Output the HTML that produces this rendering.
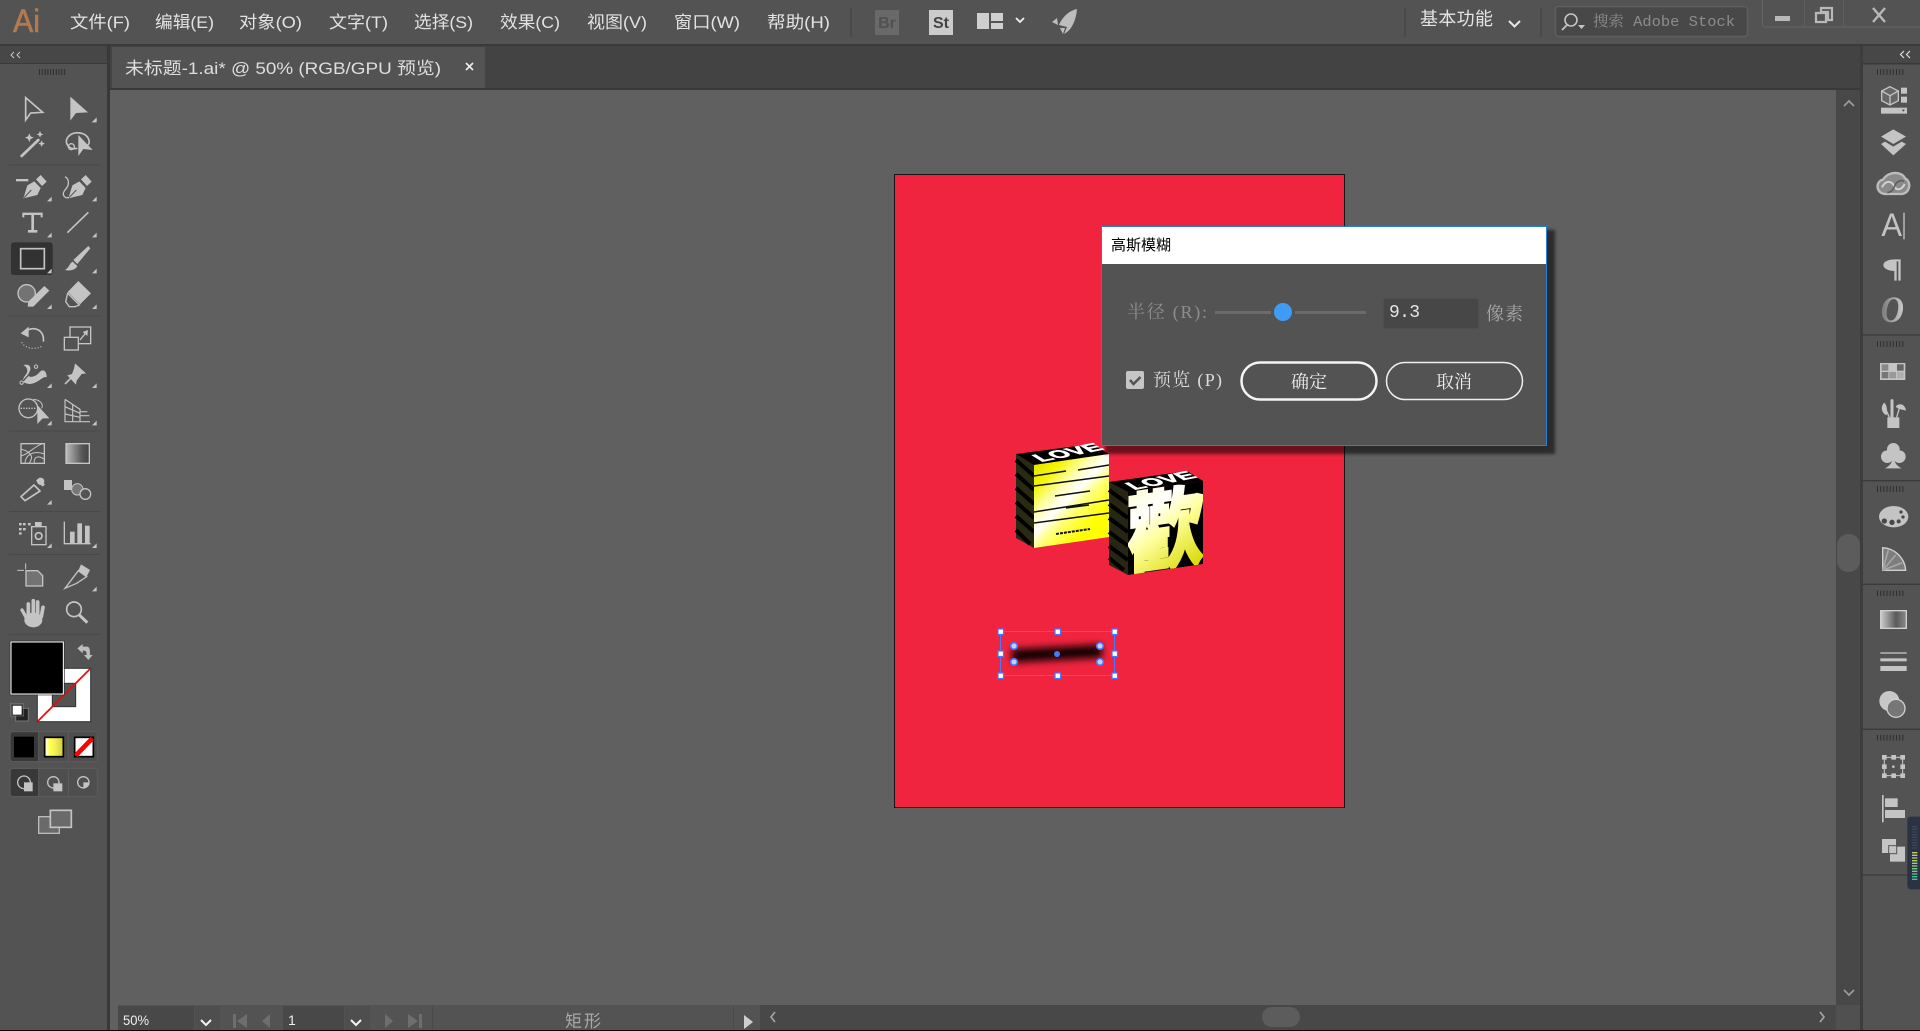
<!DOCTYPE html>
<html lang="zh"><head><meta charset="utf-8"><title>Illustrator</title>
<style>
html,body{margin:0;padding:0;background:#606060;overflow:hidden;width:1920px;height:1031px}
svg{display:block;position:absolute;left:0;top:0}
.s{font-family:"Liberation Sans","Noto Sans CJK SC",sans-serif}
.r{font-family:"Liberation Serif","Noto Serif CJK SC",serif}
.m{font-family:"Liberation Mono","Noto Serif CJK SC",monospace}
.menu{font-size:17px;fill:#e2e2e2}
</style></head><body>
<svg width="1920" height="1031" viewBox="0 0 1920 1031" xmlns="http://www.w3.org/2000/svg">
<defs>
<linearGradient id="g1" x1="0" x2="1"><stop offset="0" stop-color="#bbb"/><stop offset=".7" stop-color="#555"/><stop offset="1" stop-color="#444"/></linearGradient>
<linearGradient id="g2" x1="0" x2="1"><stop offset="0" stop-color="#fff"/><stop offset=".35" stop-color="#ffff30"/><stop offset=".5" stop-color="#f4f460"/><stop offset="1" stop-color="#cfcf30"/></linearGradient>
<linearGradient id="g3" x1="0" x2="1"><stop offset="0" stop-color="#ccc"/><stop offset=".6" stop-color="#5a5a5a"/><stop offset="1" stop-color="#8a8a8a"/></linearGradient>
<linearGradient id="g4" x1="0" x2="1"><stop offset="0" stop-color="#777"/><stop offset="1" stop-color="#ccc"/></linearGradient>
<linearGradient id="yl" gradientUnits="userSpaceOnUse" x1="1034" y1="470" x2="1109" y2="545"><stop offset="0" stop-color="#e8e800"/><stop offset=".12" stop-color="#f4f400"/><stop offset=".3" stop-color="#ffffb0"/><stop offset=".42" stop-color="#ffffff"/><stop offset=".55" stop-color="#ffff70"/><stop offset=".75" stop-color="#ffff00"/><stop offset="1" stop-color="#ffff00"/></linearGradient>
<linearGradient id="yr" gradientUnits="userSpaceOnUse" x1="0" y1="-78" x2="55" y2="12"><stop offset="0" stop-color="#ffffd0"/><stop offset=".3" stop-color="#ffffff"/><stop offset=".55" stop-color="#ffffa0"/><stop offset="1" stop-color="#dcdc10"/></linearGradient>
<clipPath id="cr"><polygon points="1128,492 1203,481 1203,564 1128,575"/></clipPath>
<filter id="bl" x="-30%" y="-200%" width="160%" height="500%"><feGaussianBlur stdDeviation="3.800"/></filter>
<filter id="sh" x="-5%" y="-5%" width="110%" height="110%"><feGaussianBlur stdDeviation="1.5"/></filter>
</defs>

<!-- base -->
<rect width="1920" height="1031" fill="#606060"/>

<!-- artboard -->
<rect x="894.500" y="174.500" width="450" height="633" fill="#f1243f" stroke="#161616" stroke-width="1"/>

<!-- 3D lettering left -->
<polygon points="1016,454 1034,465 1034,548 1016,538" fill="#2a2a12"/>
<g stroke="#000" stroke-width="4"><path d="M1016 460 1034 476M1016 474 1034 490M1016 488 1034 504M1016 502 1034 518M1016 516 1034 532M1016 530 1030 544"/></g>
<polygon points="1016,454 1092,444 1109,454 1034,465" fill="#000"/>
<polygon points="1034,465 1109,454 1109,537 1034,548" fill="url(#yl)"/>
<g stroke="#111" fill="none">
<path stroke-width="1.500" d="M1034 476 1066 471M1078 470 1109 465M1034 486 1109 476M1055 496 1090 491M1066 508 1089 505M1034 512 1109 500M1034 523 1109 513"/>
<path stroke-width="2" stroke-dasharray="3 1" d="M1056 534 1090 529"/>
</g>
<text class="s" font-size="17" font-weight="700" fill="#fff" stroke="#fff" stroke-width=".7" transform="matrix(1 -.2 .9 .55 1041 462)" textLength="64" lengthAdjust="spacingAndGlyphs">LOVE</text>

<!-- 3D lettering right -->
<polygon points="1109,482 1128,492 1128,575 1109,565" fill="#262612"/>
<g stroke="#000" stroke-width="4"><path d="M1109 490 1128 504M1109 504 1128 518M1109 518 1128 532M1109 532 1128 546M1109 546 1128 560M1109 558 1124 570"/></g>
<polygon points="1109,482 1187,471 1203,481 1128,492" fill="#000"/>
<polygon points="1128,492 1203,481 1203,564 1128,575" fill="#000"/>
<g clip-path="url(#cr)">
<text font-size="88" font-weight="900" fill="url(#yr)" stroke="url(#yr)" stroke-width="2.500" transform="matrix(1 -.147 0 1 1127 568)" textLength="77" lengthAdjust="spacingAndGlyphs" style="font-family:'Noto Sans CJK TC','Noto Sans CJK SC',sans-serif">歡</text>
</g>
<text class="s" font-size="17" font-weight="700" fill="#fff" stroke="#fff" stroke-width=".7" transform="matrix(1 -.2 .9 .55 1134 490)" textLength="64" lengthAdjust="spacingAndGlyphs">LOVE</text>

<!-- blurred object + selection -->
<rect x="1012" y="647" width="90" height="13" fill="#0a0003" filter="url(#bl)" transform="rotate(-3 1057 654)"/>
<rect x="1000.500" y="631.500" width="114" height="44" fill="none" stroke="#4a78ff" stroke-width="1"/>
<g fill="#fff" stroke="#3f7cff" stroke-width="1.200">
<rect x="998" y="629" width="5.500" height="5.500"/><rect x="1055" y="629" width="5.500" height="5.500"/><rect x="1112" y="629" width="5.500" height="5.500"/>
<rect x="998" y="651" width="5.500" height="5.500"/><rect x="1112" y="651" width="5.500" height="5.500"/>
<rect x="998" y="673" width="5.500" height="5.500"/><rect x="1055" y="673" width="5.500" height="5.500"/><rect x="1112" y="673" width="5.500" height="5.500"/>
</g>
<circle cx="1057" cy="654" r="3" fill="#3f7cff"/>
<g fill="#bcd0ff" stroke="#3f7cff" stroke-width="1.500">
<circle cx="1014" cy="646" r="3.300"/><circle cx="1100" cy="646" r="3.300"/><circle cx="1014" cy="662" r="3.300"/><circle cx="1100" cy="662" r="3.300"/>
</g>

<!-- dialog -->
<rect x="1105" y="230" width="450" height="224" fill="#000" opacity=".55" filter="url(#sh)"/>
<rect x="1101.500" y="226.500" width="445" height="219" fill="#535353" stroke="#2a7fd8" stroke-width="1"/>
<rect x="1102" y="227" width="444" height="37" fill="#fff"/>
<text class="s" x="1111" y="250" font-size="15" fill="#000" textLength="60">高斯模糊</text>
<text class="r" x="1127" y="318" font-size="18" fill="#8e8e8e" textLength="80" lengthAdjust="spacing">半径 (R):</text>
<rect x="1215" y="311" width="151" height="3" fill="#6b6b6b"/>
<circle cx="1283" cy="312" r="12" fill="#535353"/>
<circle cx="1283" cy="312" r="9" fill="#3f9bf5"/>
<rect x="1383.500" y="298.500" width="95" height="30" rx="3" fill="#474747" stroke="#4e4e4e"/>
<text class="m" x="1389" y="317" font-size="18" fill="#e6e6e6" textLength="31" lengthAdjust="spacing">9.3</text>
<text class="r" x="1486" y="320" font-size="18" fill="#a8a8a8" textLength="37">像素</text>
<rect x="1126" y="371" width="18" height="18" rx="2" fill="#c6c6c6"/>
<path d="M1130 380l3.500 4 7-7" fill="none" stroke="#555" stroke-width="2.500"/>
<text class="r" x="1153" y="386" font-size="18" fill="#dcdcdc" textLength="69" lengthAdjust="spacing">预览 (P)</text>
<rect x="1241.500" y="362.500" width="135" height="37" rx="18.500" fill="none" stroke="#f4f4f4" stroke-width="2.500"/>
<text class="r" x="1309" y="388" font-size="18" fill="#eee" text-anchor="middle">确定</text>
<rect x="1386.500" y="362.500" width="136" height="37" rx="18.500" fill="none" stroke="#eee" stroke-width="1.500"/>
<text class="r" x="1454" y="388" font-size="18" fill="#eee" text-anchor="middle">取消</text>

<!-- top bar -->
<rect width="1920" height="45" fill="#535353"/>
<rect y="44" width="1920" height="2" fill="#3a3a3a"/>
<text class="s" x="13" y="32" font-size="32" fill="#b47a4c" stroke="#b47a4c" stroke-width=".6" textLength="27" lengthAdjust="spacingAndGlyphs">Ai</text>
<g class="s menu">
<text x="70" y="28" textLength="60" lengthAdjust="spacingAndGlyphs">文件(F)</text>
<text x="155" y="28" textLength="59" lengthAdjust="spacingAndGlyphs">编辑(E)</text>
<text x="239" y="28" textLength="63" lengthAdjust="spacingAndGlyphs">对象(O)</text>
<text x="329" y="28" textLength="59" lengthAdjust="spacingAndGlyphs">文字(T)</text>
<text x="414" y="28" textLength="59" lengthAdjust="spacingAndGlyphs">选择(S)</text>
<text x="500" y="28" textLength="60" lengthAdjust="spacingAndGlyphs">效果(C)</text>
<text x="587" y="28" textLength="60" lengthAdjust="spacingAndGlyphs">视图(V)</text>
<text x="674" y="28" textLength="66" lengthAdjust="spacingAndGlyphs">窗口(W)</text>
<text x="767" y="28" textLength="63" lengthAdjust="spacingAndGlyphs">帮助(H)</text>
</g>
<rect x="850" y="8" width="2" height="29" fill="#4a4a4a"/>
<rect x="875" y="10" width="24" height="25" fill="#696969"/>
<text class="s" x="887" y="28" font-size="16" font-weight="700" fill="#505050" text-anchor="middle">Br</text>
<rect x="929" y="10" width="24" height="25" fill="#cbcbcb"/>
<text class="s" x="941" y="28" font-size="16" font-weight="700" fill="#444" text-anchor="middle">St</text>
<path d="M977 13h12v16h-12zM991 13h12v8h-12zM991 23h12v6h-12z" fill="#cfcfcf"/>
<path d="M1016 18l4 4 4-4" fill="none" stroke="#f0f0f0" stroke-width="1.800"/>
<path d="M1077 9C1068 11 1062 18 1059 25L1067 27 1064 34C1072 30 1076 20 1077 9ZM1057 18L1052 22 1058 25ZM1060 28L1063 34 1065 28Z" fill="#bdbdbd"/>
<rect x="1404" y="8" width="2" height="29" fill="#4a4a4a"/>
<text class="s" x="1420" y="25" font-size="18" fill="#e4e4e4" textLength="73">基本功能</text>
<path d="M1509 21l5.500 5.500 5.500-5.500" fill="none" stroke="#e8e8e8" stroke-width="2"/>
<rect x="1540" y="8" width="2" height="29" fill="#4a4a4a"/>
<rect x="1555.500" y="6.500" width="192" height="30" rx="3" fill="#484848" stroke="#5e5e5e" stroke-width="1.500"/>
<circle cx="1571" cy="20" r="6" fill="none" stroke="#c4c4c4" stroke-width="1.600"/>
<path d="M1567 25l-5 5" stroke="#c4c4c4" stroke-width="1.800"/>
<path d="M1578 25h7l-3.500 4z" fill="#c4c4c4"/>
<text class="m" x="1593" y="26" font-size="15" fill="#8c8c8c" textLength="142" lengthAdjust="spacingAndGlyphs">搜索 Adobe Stock</text>
<path d="M1762.500 0V24q0 3 3 3H1920" fill="none" stroke="#646464"/>
<path d="M1804.500 0V27M1843.500 0V27" stroke="#5e5e5e"/>
<rect x="1775" y="16" width="15" height="5" fill="#b8b8b8"/>
<path d="M1821 8h11v12h-4v-8h-7z M1816 13h10v9h-10z" fill="none" stroke="#b8b8b8" stroke-width="2.200"/>
<path d="M1873 8l12 14M1885 8l-12 14" stroke="#b8b8b8" stroke-width="2.400"/>

<!-- tab bar -->
<rect x="110" y="46" width="1752" height="44" fill="#434343"/>
<rect x="110" y="88" width="1752" height="2" fill="#393939"/>
<rect x="112" y="47" width="373" height="41" fill="#535353"/>
<text class="s" x="125" y="74" font-size="17" fill="#dedede" textLength="316" lengthAdjust="spacingAndGlyphs">未标题-1.ai* @ 50% (RGB/GPU 预览)</text>
<path d="M466 63l7 7M473 63l-7 7" stroke="#eee" stroke-width="1.600"/>

<!-- left panel -->
<rect x="0" y="46" width="108" height="985" fill="#535353"/>
<rect x="0" y="46" width="108" height="18" fill="#474747"/>
<rect x="0" y="63" width="108" height="1" fill="#3a3a3a"/>
<rect x="107" y="46" width="3" height="985" fill="#383838"/>
<path d="M14 52l-3 3 3 3M20 52l-3 3 3 3" fill="none" stroke="#c8c8c8" stroke-width="1"/>
<path d="M39 72H67" stroke="#2e2e2e" stroke-width="6" stroke-dasharray="1 1.800"/>

<g transform="translate(0,80) scale(.33333)" fill="#c4c4c4" stroke="none">
 <path d="M77 53L128 97 92 99 77 120Z" fill="none" stroke="#c4c4c4" stroke-width="5"/>
 <path d="M211 50L264 97 228 99 211 122Z"/>
 <path d="M290 112v15h-15z"/>
 <path d="M65 228L115 180" stroke="#c4c4c4" stroke-width="8" stroke-linecap="round"/>
 <path d="M88 160l4 9 9 4-9 4-4 9-4-9-9-4 9-4zM120 153l3 7 7 3-7 3-3 7-3-7-7-3 7-3zM125 181l3 7 7 3-7 3-3 7-3-7-7-3 7-3z"/>
 <path d="M232 205C205 212 190 185 205 170 220 152 258 155 266 178 270 190 266 196 256 198" fill="none" stroke="#c4c4c4" stroke-width="5"/>
 <circle cx="214" cy="200" r="9" fill="none" stroke="#c4c4c4" stroke-width="4"/>
 <path d="M235 165L278 210 250 207 235 228Z"/>
 <rect x="48" y="297" width="37" height="7"/>
 <path d="M108 298L122 285 140 305 126 318ZM103 304L122 324 112 345 70 355 82 316Z"/>
 <path d="M72 353L94 330" stroke="#535353" stroke-width="3"/>
 <path d="M155 350v14h-14z"/>
 <path d="M243 298L257 285 275 305 261 318ZM238 304L257 324 247 345 205 355 217 316Z"/>
 <path d="M207 353L229 330" stroke="#535353" stroke-width="3"/>
 <path d="M195 290C212 300 205 320 195 330 183 345 195 357 207 352" fill="none" stroke="#c4c4c4" stroke-width="4"/>
 <path d="M290 350v14h-14z"/>
 <path d="M67 398H128V412H122V405H102V450H112V458H84V450H94V405H73V412H67Z"/>
 <path d="M155 458v14h-14z"/>
 <path d="M202 458L265 397" stroke="#c4c4c4" stroke-width="5"/>
 <path d="M290 458v14h-14z"/>
 <rect x="33" y="487" width="125" height="98" rx="8" fill="#323232"/>
 <rect x="62" y="506" width="71" height="60" fill="none" stroke="#c4c4c4" stroke-width="5"/>
 <path d="M155 566v14h-14z"/>
 <path d="M265 498L271 505 232 552 220 540ZM218 545L232 558C226 572 205 573 195 570 208 563 208 550 218 545Z"/>
 <path d="M290 566v14h-14z"/>
 <circle cx="80" cy="640" r="26" fill="#737373" stroke="#c4c4c4" stroke-width="4"/>
 <path d="M85 665L133 618 148 632 100 680 83 680Z"/>
 <path d="M155 673v14h-14z"/>
 <path d="M235 603L273 640 240 673 203 636Z"/>
 <path d="M203 640L238 675 225 680H208L197 665Z" fill="#535353" stroke="#c4c4c4" stroke-width="4"/>
 <path d="M290 673v14h-14z"/>
 <path d="M27 708H300M27 255H300" stroke="#484848" stroke-width="3"/>
 <path d="M75 755C100 735 135 750 130 785" fill="none" stroke="#c4c4c4" stroke-width="5"/>
 <path d="M62 760L86 740V772Z"/>
 <path d="M65 787C75 805 105 812 128 797" fill="none" stroke="#c4c4c4" stroke-width="4" stroke-dasharray="3 6"/>
 <rect x="210" y="741" width="62" height="50" fill="none" stroke="#c4c4c4" stroke-width="4"/>
 <rect x="193" y="772" width="42" height="38" fill="#535353" stroke="#c4c4c4" stroke-width="4"/>
 <path d="M240 780L258 758" stroke="#c4c4c4" stroke-width="4"/>
 <path d="M264 750L262 768 248 756Z"/>
</g>

<g transform="translate(0,350) scale(.33333)" fill="#c4c4c4" stroke="none">
 <path d="M70 45C92 40 96 55 86 70 80 85 105 85 120 65 130 55 141 65 140 82 130 76 115 100 90 102 70 100 60 95 80 70 85 60 80 50 70 45Z"/>
 <path d="M65 98L108 50" stroke="#535353" stroke-width="4"/>
 <circle cx="65" cy="98" r="5" fill="#535353" stroke="#c4c4c4" stroke-width="3"/><circle cx="108" cy="50" r="5" fill="#535353" stroke="#c4c4c4" stroke-width="3"/>
 <path d="M155 100v14h-14z"/>
 <path d="M225 40L258 70 245 72 230 92 228 104 202 76 216 72 222 56Z"/>
 <path d="M212 85L195 102" stroke="#c4c4c4" stroke-width="5"/>
 <path d="M290 100v14h-14z"/>
 <circle cx="85" cy="175" r="28" fill="none" stroke="#c4c4c4" stroke-width="4"/>
 <path d="M100 148C125 150 130 165 125 175" fill="none" stroke="#c4c4c4" stroke-width="3"/>
 <path d="M62 175H110" stroke="#c4c4c4" stroke-width="4" stroke-dasharray="4 4"/>
 <path d="M112 165L148 205 128 205 112 222Z"/>
 <path d="M155 212v14h-14z"/>
 <path d="M195 148V215H270M195 148L240 178V215M195 170L240 190M195 192L240 202M218 162V215M240 185H262M240 197H268" fill="none" stroke="#c4c4c4" stroke-width="3.500"/>
 <path d="M290 212v14h-14z"/>
 <path d="M27 243H300M27 484H300M27 613H300" stroke="#484848" stroke-width="3"/>
 <rect x="63" y="281" width="70" height="59" fill="none" stroke="#c4c4c4" stroke-width="4"/>
 <path d="M63 318C90 310 100 290 128 281M75 340C75 315 100 300 133 312M103 340C100 320 115 315 133 328M63 298C80 300 90 310 95 320M95 320C95 330 90 335 88 340" fill="none" stroke="#c4c4c4" stroke-width="3"/>
 <rect x="198" y="281" width="70" height="59" fill="url(#g1)" stroke="#c4c4c4" stroke-width="4"/>
 <path d="M115 385L135 403 128 410 108 392Z"/>
 <circle cx="122" cy="394" r="11"/>
 <path d="M102 405L120 423 75 452 63 440Z" fill="none" stroke="#c4c4c4" stroke-width="5" stroke-linejoin="round"/>
 <path d="M155 450v14h-14z"/>
 <rect x="192" y="390" width="24" height="30"/>
 <circle cx="232" cy="418" r="17" fill="#777" stroke="#c4c4c4" stroke-width="3"/>
 <circle cx="256" cy="432" r="16" fill="#535353" stroke="#c4c4c4" stroke-width="4"/>
 <path d="M57 519h8v7h-8zM69 519h8v7h-8zM84 519h8v7h-8zM57 534h8v7h-8zM69 534h8v7h-8zM57 547h8v7h-8z"/>
 <rect x="105" y="516" width="20" height="14"/>
 <rect x="95" y="530" width="43" height="54" fill="none" stroke="#c4c4c4" stroke-width="4"/>
 <circle cx="116" cy="558" r="10" fill="none" stroke="#c4c4c4" stroke-width="5"/>
 <path d="M155 580v14h-14z"/>
 <path d="M193 515V581H272" fill="none" stroke="#c4c4c4" stroke-width="4"/>
 <rect x="210" y="545" width="14" height="35"/><rect x="232" y="520" width="14" height="60"/><rect x="255" y="527" width="14" height="53"/>
 <path d="M290 580v14h-14z"/>
 <path d="M77 640V658M52 661H72" stroke="#c4c4c4" stroke-width="3"/>
 <path d="M78 662H113L128 677V708H78Z" fill="#737373" stroke="#c4c4c4" stroke-width="4"/>
 <path d="M243 643L270 660 260 680 235 662Z"/>
 <path d="M235 662L260 680 230 700 195 715Z" fill="none" stroke="#c4c4c4" stroke-width="4"/>
 <path d="M290 710v14h-14z"/>
 <path d="M85 800V762M100 795V752M113 795V756M124 800L129 772" stroke="#c4c4c4" stroke-width="11" stroke-linecap="round"/>
 <path d="M66 780L80 805" stroke="#c4c4c4" stroke-width="10" stroke-linecap="round"/>
 <ellipse cx="100" cy="810" rx="27" ry="22"/>
 <circle cx="222" cy="778" r="22" fill="none" stroke="#c4c4c4" stroke-width="5"/>
 <path d="M238 795L262 818" stroke="#c4c4c4" stroke-width="9"/>
</g>

<g transform="translate(0,620) scale(.33333)" fill="#c4c4c4" stroke="none">
 <path d="M27 43H300" stroke="#484848" stroke-width="3"/>
 <rect x="112" y="145" width="160" height="160" fill="#fff" stroke="#333" stroke-width="3"/>
 <rect x="157" y="190" width="70" height="70" fill="#535353" stroke="#333" stroke-width="3"/>
 <path d="M114 303L270 147" stroke="#f00" stroke-width="5"/>
 <rect x="33" y="66" width="157" height="156" fill="#000" stroke="#fff" stroke-width="3"/>
 <rect x="30" y="63" width="163" height="162" fill="none" stroke="#333" stroke-width="2"/>
 <path d="M232 85L248 72V80H262C270 82 270 92 270 105H278L265 120 252 105H260C260 95 258 92 250 92H248V100Z" fill="#bdbdbd"/>
 <rect x="47" y="265" width="38" height="38" fill="#222" stroke="#777" stroke-width="3"/>
 <rect x="31" y="250" width="40" height="38" fill="none" stroke="#777" stroke-width="2"/>
 <rect x="37" y="256" width="29" height="29" fill="#fff" stroke="#111" stroke-width="2"/>
 <rect x="30" y="335" width="262" height="90" rx="8" fill="#4e4e4e" stroke="#5c5c5c" stroke-width="3"/>
 <path d="M32 345q0-8 8-8H115V423H40q-8 0-8-8Z" fill="#383838"/>
 <path d="M116 337V423M205 337V423" stroke="#5c5c5c" stroke-width="3"/>
 <rect x="42" y="350" width="60" height="62" fill="#000"/>
 <rect x="134" y="352" width="56" height="58" fill="url(#g2)" stroke="#000" stroke-width="5"/>
 <rect x="224" y="352" width="56" height="58" fill="#fff" stroke="#000" stroke-width="5"/>
 <path d="M227 407L277 355" stroke="#f00" stroke-width="14"/>
 <rect x="30" y="445" width="262" height="85" rx="8" fill="#4e4e4e" stroke="#5c5c5c" stroke-width="3"/>
 <path d="M32 455q0-8 8-8H115V528H40q-8 0-8-8Z" fill="#383838"/>
 <path d="M116 447V528M205 447V528" stroke="#5c5c5c" stroke-width="3"/>
 <circle cx="72" cy="487" r="19" fill="none" stroke="#c4c4c4" stroke-width="4"/>
 <rect x="72" y="487" width="26" height="27"/>
 <circle cx="160" cy="487" r="17" fill="none" stroke="#c4c4c4" stroke-width="4"/>
 <rect x="160" y="490" width="27" height="24"/>
 <circle cx="250" cy="487" r="17" fill="none" stroke="#c4c4c4" stroke-width="4"/>
 <path d="M250 487h17a17 17 0 0 1-17 17Z"/>
 <rect x="116" y="590" width="62" height="50" fill="#6a6a6a" stroke="#bbb" stroke-width="4"/>
 <rect x="151" y="571" width="63" height="51" fill="#6a6a6a" stroke="#c4c4c4" stroke-width="5"/>
</g>

<!-- canvas scrollbars -->
<rect x="1836" y="90" width="26" height="915" fill="#484848"/>
<rect x="1837" y="534" width="23" height="38" rx="11" fill="#5c5c5c"/>
<path d="M1844 106l5-5 5 5" fill="none" stroke="#9a9a9a" stroke-width="1.800"/>
<path d="M1844 990l5 5 5-5" fill="none" stroke="#9a9a9a" stroke-width="1.800"/>
<rect x="1836" y="1005" width="24" height="25" fill="#505050"/>

<!-- right panel -->
<rect x="1860" y="46" width="3" height="985" fill="#3d3d3d"/>
<rect x="1863" y="46" width="57" height="985" fill="#535353"/>
<rect x="1863" y="46" width="57" height="18" fill="#474747"/>
<rect x="1863" y="63" width="57" height="1.500" fill="#383838"/>
<path d="M1904 51l-3.500 3.500 3.500 3.500M1910 51l-3.500 3.500 3.500 3.500" fill="none" stroke="#e0e0e0" stroke-width="1.200"/>

<g transform="translate(1830,40) scale(.33333)" fill="#c4c4c4" stroke="none">
 <path d="M141 96H226" stroke="#2e2e2e" stroke-width="17" stroke-dasharray="3 6.500"/>
 <path d="M180 140L205 153V182L180 195 155 182V153Z" fill="#666" stroke="#c4c4c4" stroke-width="4"/>
 <path d="M155 153L180 167 205 153M180 167V195" fill="none" stroke="#c4c4c4" stroke-width="4"/>
 <rect x="213" y="143" width="18" height="18"/><rect x="213" y="170" width="18" height="18"/>
 <rect x="153" y="203" width="78" height="18"/>
 <path d="M215 209h10l-5 6z" fill="#444"/>
 <path d="M190 268L228 290 190 312 153 290Z"/>
 <path d="M153 312L165 305 190 320 215 305 228 312 190 346Z"/>
 <path d="M165 462C138 460 134 425 160 418 175 393 215 393 225 415 246 425 240 460 215 462Z" fill="#8a8a8a" stroke="#bdbdbd" stroke-width="7"/>
 <path d="M156 442C168 418 186 424 192 438 199 452 214 452 224 432" fill="none" stroke="#d0d0d0" stroke-width="6"/>
 <path d="M172 458C186 456 190 448 194 438 198 426 212 418 222 424" fill="none" stroke="#5e5e5e" stroke-width="5"/>
 <text class="s" x="154" y="588" font-size="96" fill="#c4c4c4" textLength="62" lengthAdjust="spacingAndGlyphs">A</text>
 <rect x="220" y="518" width="4" height="80"/>
 <path d="M195 658H212V722H205V664H200V722H193V693C175 693 160 685 160 675 160 665 175 658 195 658Z"/>
 <text class="r" x="152" y="846" font-size="110" font-style="italic" font-weight="700" fill="url(#g4)" textLength="70" lengthAdjust="spacingAndGlyphs">O</text>
 <path d="M97 885H270" stroke="#3a3a3a" stroke-width="4"/>
</g>

<g transform="translate(1830,340) scale(.33333)" fill="#c4c4c4" stroke="none">
 <path d="M141 12H226" stroke="#2e2e2e" stroke-width="17" stroke-dasharray="3 6.500"/>
 <rect x="150" y="69" width="76" height="51"/>
 <rect x="155" y="73" width="20" height="19" fill="#888"/><rect x="178" y="73" width="20" height="19" fill="#c6c6c6"/><rect x="201" y="73" width="20" height="19" fill="#666"/>
 <rect x="155" y="96" width="20" height="19" fill="#777"/><rect x="178" y="96" width="20" height="19" fill="#999"/><rect x="201" y="96" width="20" height="19" fill="#b0b0b0"/>
 <rect x="172" y="232" width="36" height="32"/>
 <path d="M186 232V182" stroke="#c4c4c4" stroke-width="9" stroke-linecap="round"/>
 <path d="M178 232L166 205" stroke="#c4c4c4" stroke-width="4"/>
 <path d="M200 232L208 205" stroke="#c4c4c4" stroke-width="4"/>
 <path d="M163 188C150 200 155 220 170 226 172 210 172 198 163 188ZM197 200C205 188 225 190 228 212 215 208 205 208 197 200Z"/>
 <circle cx="190" cy="328" r="19"/><circle cx="172" cy="350" r="19"/><circle cx="208" cy="350" r="19"/>
 <path d="M188 345C188 365 184 375 165 385H215C196 375 192 365 192 345Z"/>
 <path d="M97 422H270M97 733H270" stroke="#3a3a3a" stroke-width="4"/>
 <path d="M141 447H226" stroke="#2e2e2e" stroke-width="17" stroke-dasharray="3 6.500"/>
 <ellipse cx="191" cy="530" rx="44" ry="32"/>
 <circle cx="163" cy="543" r="8" fill="#484848"/><circle cx="186" cy="547" r="8" fill="#484848"/><circle cx="206" cy="544" r="6" fill="#484848"/><circle cx="219" cy="531" r="5" fill="#484848"/><circle cx="213" cy="516" r="5" fill="#484848"/>
 <path d="M158 623C195 625 225 655 227 691H158Z" fill="#7d7d7d" stroke="#d0d0d0" stroke-width="4"/>
 <path d="M158 691L175 630M158 691L197 645M158 691L217 668" stroke="#a5a5a5" stroke-width="5"/>
 <path d="M141 760H226" stroke="#2e2e2e" stroke-width="17" stroke-dasharray="3 6.500"/>
 <rect x="152" y="812" width="77" height="53" fill="url(#g3)" stroke="#d0d0d0" stroke-width="4"/>
</g>

<g transform="translate(1830,640) scale(.33333)" fill="#c4c4c4" stroke="none">
 <rect x="151" y="37" width="79" height="4"/><rect x="151" y="55" width="79" height="9"/><rect x="151" y="78" width="79" height="15"/>
 <circle cx="178" cy="183" r="30" fill="#c8c8c8"/>
 <circle cx="198" cy="205" r="27" fill="#777" stroke="#cfcfcf" stroke-width="4"/>
 <path d="M97 268H270M97 705H270" stroke="#3a3a3a" stroke-width="4"/>
 <path d="M141 293H226" stroke="#2e2e2e" stroke-width="17" stroke-dasharray="3 6.500"/>
 <rect x="163" y="352" width="55" height="55" fill="none" stroke="#ccc" stroke-width="3"/>
 <path d="M156 345h14v14h-14zM184 345h14v14h-14zM211 345h14v14h-14zM156 373h14v14h-14zM211 373h14v14h-14zM156 400h14v14h-14zM184 400h14v14h-14zM211 400h14v14h-14z"/>
 <circle cx="190" cy="380" r="4"/>
 <rect x="156" y="465" width="5" height="82"/>
 <rect x="165" y="475" width="38" height="26"/><rect x="165" y="510" width="60" height="24"/>
 <rect x="156" y="597" width="42" height="42"/><rect x="180" y="620" width="45" height="45"/>
 <rect x="176" y="617" width="24" height="24" fill="none" stroke="#555" stroke-width="3"/>
 <path d="M232 542q0-12 12-12H270V748H244q-12 0-12-12Z" fill="#2b3243"/>
 <path d="M246 560H262M246 568H262M246 576H262M246 584H262M246 592H262M246 600H262M246 608H262M246 616H262M246 624H262" stroke="#3e4656" stroke-width="4"/>
 <path d="M246 638H262M246 646H262M246 654H262" stroke="#c9cf5a" stroke-width="4"/>
 <path d="M246 662H262M246 670H262M246 678H262" stroke="#a7cf70" stroke-width="4"/>
 <path d="M246 686H262M246 694H262M246 702H262" stroke="#72c98c" stroke-width="4"/>
 <path d="M246 710H262M246 718H262" stroke="#3fc3a8" stroke-width="4"/>
</g>

<!-- status bar -->
<rect x="118" y="1005" width="642" height="25" fill="#535353"/>
<rect x="118" y="1006" width="76" height="24" fill="#484848"/>
<rect x="195" y="1006" width="25" height="24" fill="#4e4e4e"/>
<text class="s" x="123" y="1025" font-size="14" fill="#eee" textLength="26" lengthAdjust="spacingAndGlyphs">50%</text>
<path d="M201 1020l5 5 5-5" fill="none" stroke="#f4f4f4" stroke-width="2"/>
<rect x="233" y="1014" width="3" height="14" fill="#6e6e6e"/>
<path d="M247 1014v14l-10-7zM270 1014v14l-8-7z" fill="#6e6e6e"/>
<rect x="283" y="1006" width="61" height="24" fill="#484848"/>
<rect x="345" y="1006" width="25" height="24" fill="#4e4e4e"/>
<text class="s" x="288" y="1025" font-size="14" fill="#eee">1</text>
<path d="M351 1020l5 5 5-5" fill="none" stroke="#f4f4f4" stroke-width="2"/>
<path d="M385 1014v14l8-7zM408 1014v14l10-7z" fill="#6e6e6e"/>
<rect x="419" y="1014" width="3" height="14" fill="#6e6e6e"/>
<path d="M432.500 1006V1030" stroke="#4a4a4a"/>
<text class="s" x="565" y="1027" font-size="17" fill="#a8a8a8" textLength="36">矩形</text>
<path d="M733.500 1006V1030" stroke="#4a4a4a"/>
<path d="M744 1015v14l9-7z" fill="#cfcfcf"/>
<rect x="760" y="1005" width="1076" height="25" fill="#484848"/>
<path d="M775 1012l-4 5 4 5" fill="none" stroke="#a8a8a8" stroke-width="1.600"/>
<rect x="1262" y="1007" width="38" height="20" rx="10" fill="#5c5c5c"/>
<path d="M1820 1012l4 5-4 5" fill="none" stroke="#a8a8a8" stroke-width="1.600"/>
<rect x="0" y="1030" width="1920" height="1" fill="#0a0a0a"/>
</svg>
</body></html>
